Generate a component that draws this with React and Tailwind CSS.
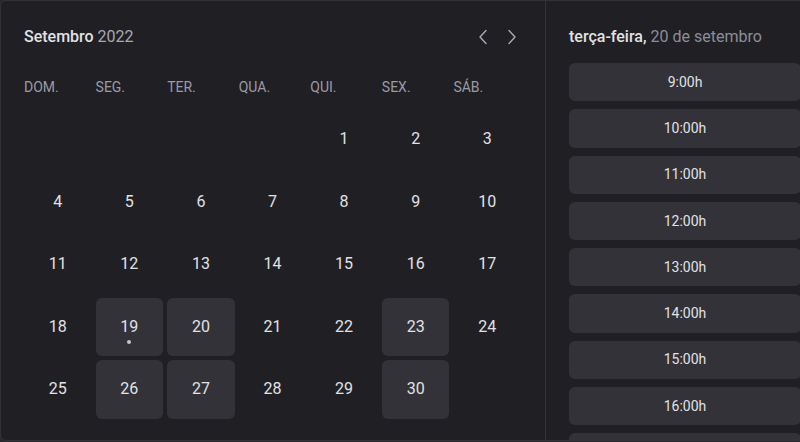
import React from "react";

const weekDays = ["DOM.", "SEG.", "TER.", "QUA.", "QUI.", "SEX.", "SÁB."];
const available = new Set([19, 20, 23, 26, 27, 30]);
const times = ["9:00h", "10:00h", "11:00h", "12:00h", "13:00h", "14:00h", "15:00h", "16:00h", "17:00h"];

function Chevron({ dir }) {
  return (
    <svg width="10" height="16" viewBox="0 0 10 16" fill="none" stroke="#a9a9b2" strokeWidth="1.4" strokeLinecap="round" strokeLinejoin="round">
      {dir === "left" ? <polyline points="8,1.5 2,8 8,14.5" /> : <polyline points="2,1.5 8,8 2,14.5" />}
    </svg>
  );
}

export default function App() {
  const cells = [];
  for (let i = 0; i < 4; i++) cells.push(null);
  for (let d = 1; d <= 30; d++) cells.push(d);

  return (
    <div className="w-[800px] h-[442px] overflow-hidden bg-[#29292e]" style={{ fontFamily: "Roboto, 'Liberation Sans', sans-serif" }}>
      <div className="flex w-[826px] h-[441px] rounded-md border border-[#323238] bg-[#202024] overflow-hidden">
        <div className="w-[544px] shrink-0 pl-[23px] pr-6 pt-6">
          <div className="flex items-center justify-between h-6">
            <div className="text-[16px] leading-6 font-medium text-[#e1e1e6]">
              Setembro <span className="font-normal text-[#a8a8b3]">2022</span>
            </div>
            <div className="flex items-center gap-[19px] mr-[4px]">
              <Chevron dir="left" />
              <Chevron dir="right" />
            </div>
          </div>
          <div className="grid grid-cols-7 gap-x-1 mt-[28px] h-5 items-center">
            {weekDays.map((w) => (
              <div key={w} className="text-[14px] font-normal text-[#9a9aa5] leading-5">{w}</div>
            ))}
          </div>
          <div className="grid grid-cols-7 gap-1 mt-[13px]">
            {cells.map((d, i) => (
              <div
                key={i}
                className={`relative h-[58.5px] flex items-center justify-center rounded-md text-[16px] text-[#e1e1e6] ${d && available.has(d) ? "bg-[#323238]" : ""}`}
              >
                {d}
                {d === 19 && <span className="absolute left-1/2 top-[42px] -translate-x-1/2 w-[4px] h-[4px] rounded-full bg-[#c4c4cc]" />}
              </div>
            ))}
          </div>
        </div>
        <div className="flex-1 border-l border-[#323238] pl-[23px] pt-6 overflow-hidden">
          <div className="text-[16px] leading-6 font-medium text-[#e1e1e6]">
            terça-feira, <span className="font-normal text-[#8d8d99]">20 de setembro</span>
          </div>
          <div className="flex flex-col gap-2 mt-[14px] w-[232px]">
            {times.map((t) => (
              <div key={t} className="h-[38.3px] shrink-0 flex items-center justify-center rounded-md bg-[#323238] text-[14px] text-[#e1e1e6]">
                {t}
              </div>
            ))}
          </div>
        </div>
      </div>
    </div>
  );
}
